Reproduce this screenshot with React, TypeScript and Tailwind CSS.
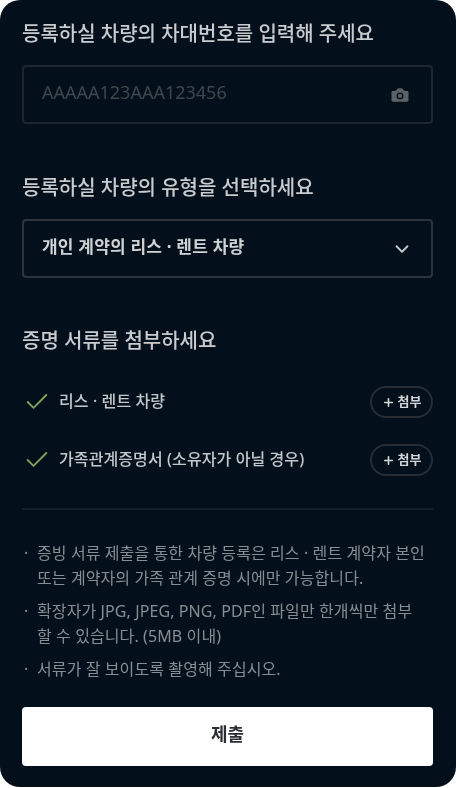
import React from 'react';
import { Camera, ChevronDown, Check, Plus } from 'lucide-react';

const font = { fontFamily: '"Noto Sans", "Noto Sans CJK KR", sans-serif' };

function AttachRow({ label }: { label: string }) {
  return (
    <div className="flex h-[32px] items-center">
      <Check className="ml-[1px] h-[28px] w-[28px] shrink-0 text-[#7fa35a]" strokeWidth={1.6} />
      <span className="ml-[8px] flex-1 pb-[2px] text-[16px] font-medium tracking-[0.1px] text-[#c4c7ca]">{label}</span>
      <button className="flex h-[32px] w-[63px] items-center justify-center gap-[3px] rounded-full border-2 border-[#262d34] text-[13px] font-bold text-[#d4d6d8]">
        <Plus className="h-[13px] w-[13px]" strokeWidth={3} />
        첨부
      </button>
    </div>
  );
}

function Note({ lines }: { lines: string[] }) {
  return (
    <li className="flex text-[16px] leading-[24.5px] tracking-[0.1px] text-[#888d92]">
      <span className="w-[15px] shrink-0 pl-[2px]">·</span>
      <span>
        {lines.map((line) => (
          <span key={line} className="block whitespace-nowrap">{line}</span>
        ))}
      </span>
    </li>
  );
}

export default function App() {
  return (
    <div className="h-[788px] w-[456px] bg-white" style={font}>
      <div className="h-[787px] rounded-[20px] bg-[#03101b] pt-[20px] pr-[23px] pl-[22px]">
        <div className="blur-[0.7px]">
          <h2 className="text-[20px] leading-[28px] font-medium text-[#c9cbce]">등록하실 차량의 차대번호를 입력해 주세요</h2>
          <div className="mt-[17px] flex h-[59px] items-center justify-between rounded-[4px] border-2 border-[#1d262e] pr-[20px] pl-[18px]">
            <span className="pb-[4px] text-[18px] text-[#3f464d]">AAAAA123AAA123456</span>
            <Camera className="h-[22px] w-[22px] text-[#5c6267]" fill="#5c6267" stroke="#03101b" strokeWidth={1.5} />
          </div>

          <h2 className="mt-[50px] text-[20px] leading-[28px] font-medium text-[#c9cbce]">등록하실 차량의 유형을 선택하세요</h2>
          <div className="mt-[17px] flex h-[59px] items-center justify-between rounded-[4px] border-2 border-[#2b343c] pr-[18px] pl-[18px]">
            <span className="pb-[3px] text-[17px] font-bold tracking-[0.2px] text-[#d0d2d4]">개인 계약의 리스 · 렌트 차량</span>
            <ChevronDown className="h-[22px] w-[22px] text-[#c4c7ca]" strokeWidth={2} />
          </div>

          <h2 className="mt-[49px] text-[20px] leading-[28px] font-medium text-[#c9cbce]">증명 서류를 첨부하세요</h2>
          <div className="mt-[31px] flex flex-col gap-[26px]">
            <AttachRow label="리스 · 렌트 차량" />
            <AttachRow label="가족관계증명서 (소유자가 아닐 경우)" />
          </div>

          <div className="mt-[32px] h-[2px] bg-[#151f29]" />

          <ul className="mt-[31px] flex flex-col gap-[9px]">
            <Note lines={['증빙 서류 제출을 통한 차량 등록은 리스 · 렌트 계약자 본인', '또는 계약자의 가족 관계 증명 시에만 가능합니다.']} />
            <Note lines={['확장자가 JPG, JPEG, PNG, PDF인 파일만 한개씩만 첨부', '할 수 있습니다. (5MB 이내)']} />
            <Note lines={['서류가 잘 보이도록 촬영해 주십시오.']} />
          </ul>

          <button className="mt-[25px] flex h-[59px] w-full items-center justify-center rounded-[4px] bg-white pb-[3px] text-[18px] font-bold text-[#2a2f34]">
            제출
          </button>
        </div>
      </div>
    </div>
  );
}
